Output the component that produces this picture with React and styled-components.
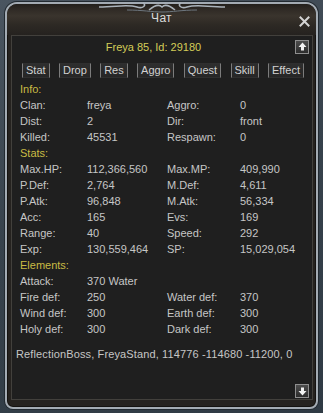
import React from "react";
import styled, { createGlobalStyle } from "styled-components";

const Global = createGlobalStyle`
  html, body { margin: 0; padding: 0; }
  body {
    width: 323px;
    height: 413px;
    overflow: hidden;
    background: linear-gradient(160deg, #4a5560 0%, #37424c 45%, #2f3a44 100%);
    font-family: "Liberation Sans", Arial, sans-serif;
  }
`;

const Page = styled.div`
  width: 323px;
  height: 413px;
  padding: 2px 5px 4px 5px;
  box-sizing: border-box;
  position: relative;
`;

const Window = styled.div`
  position: relative;
  height: 100%;
  box-sizing: border-box;
  border: 2px solid #a3abb3;
  border-radius: 12px 12px 8px 8px;
  background: #25221f;
  box-shadow: inset 0 0 0 1px #141210, 0 0 0 1px #222a31;
  display: flex;
  flex-direction: column;
`;

const Ornament = styled.svg`
  position: absolute;
  top: -3px;
  left: 50%;
  transform: translateX(-50%);
`;

const Header = styled.div`
  height: 31px;
  display: grid;
  grid-template-columns: 1fr auto 1fr;
  align-items: center;
  border-radius: 10px 10px 0 0;
  background: linear-gradient(
    180deg,
    #221f1b 0%,
    #2e2924 15%,
    #3a342d 38%,
    #2d2924 68%,
    #25221f 100%
  );
`;

const Title = styled.div`
  grid-column: 2;
  color: #dcdcdc;
  font-size: 12px;
  margin-top: -4px;
  letter-spacing: 0.3px;
`;

const Close = styled.div`
  justify-self: end;
  margin-right: 6px;
  margin-top: -3px;
  width: 11px;
  height: 11px;
`;

const Panel = styled.div`
  flex: 1;
  margin: 0 3px 7px 4px;
  background: #1f1f1f;
  border: 1px solid #42403c;
  display: flex;
  flex-direction: column;
`;

const TopRow = styled.div`
  display: grid;
  grid-template-columns: 1fr 14px;
  align-items: center;
  padding: 3px 3px 0 0;
`;

const Name = styled.div`
  text-align: center;
  color: #d4cd58;
  font-size: 11px;
  line-height: 14px;
  padding-top: 1px;
`;

const ScrollBtn = styled.div`
  width: 14px;
  height: 14px;
  box-sizing: border-box;
  border: 1px solid #8e8e8e;
  background: linear-gradient(180deg, #4c4c4c, #2c2c2c);
  display: flex;
  align-items: center;
  justify-content: center;
  align-self: ${(p) => (p.$bottom ? "flex-end" : "auto")};
  margin: ${(p) => (p.$bottom ? "auto 3px 1px 0" : "0")};
`;

const Tabs = styled.div`
  display: flex;
  justify-content: space-between;
  padding: 0 8px 0 10px;
  margin-top: 9px;
`;

const Tab = styled.div`
  height: 15px;
  box-sizing: border-box;
  padding: 0 3px;
  font-size: 11px;
  line-height: 13px;
  color: #d2d2d2;
  background: linear-gradient(180deg, #2e2e2e, #262626);
  border: 1px solid #2f2f2f;
  border-left-color: #7c7c7c;
  border-right-color: #7c7c7c;
`;

const Grid = styled.div`
  display: grid;
  grid-template-columns: 67px 80px 73px 1fr;
  padding-left: 8px;
  margin-top: 3px;
  font-size: 11px;
  line-height: 16px;
  color: #c6c6c6;
`;

const Heading = styled.div`
  grid-column: 1 / -1;
  color: #c9bb44;
`;

const Cell = styled.div`
  white-space: nowrap;
  grid-column: ${(p) => p.$span || "auto"};
`;

const Location = styled.div`
  padding-left: 4px;
  margin-top: 9px;
  font-size: 11px;
  line-height: 16px;
  letter-spacing: 0.13px;
  color: #c6c6c6;
  white-space: nowrap;
`;

const Arrow = ({ down }) => (
  <svg width="9" height="9" viewBox="0 0 9 9">
    <path
      d="M4.5 0.5 L8.5 5 L6 5 L6 8.5 L3 8.5 L3 5 L0.5 5 Z"
      fill="#f2f2f2"
      transform={down ? "rotate(180 4.5 4.5)" : undefined}
    />
  </svg>
);

const rows = [
  { h: "Info:" },
  ["Clan:", "freya", "Aggro:", "0"],
  ["Dist:", "2", "Dir:", "front"],
  ["Killed:", "45531", "Respawn:", "0"],
  { h: "Stats:" },
  ["Max.HP:", "112,366,560", "Max.MP:", "409,990"],
  ["P.Def:", "2,764", "M.Def:", "4,611"],
  ["P.Atk:", "96,848", "M.Atk:", "56,334"],
  ["Acc:", "165", "Evs:", "169"],
  ["Range:", "40", "Speed:", "292"],
  ["Exp:", "130,559,464", "SP:", "15,029,054"],
  { h: "Elements:" },
  { a: ["Attack:", "370 Water"] },
  ["Fire def:", "250", "Water def:", "370"],
  ["Wind def:", "300", "Earth def:", "300"],
  ["Holy def:", "300", "Dark def:", "300"],
];

const tabs = ["Stat", "Drop", "Res", "Aggro", "Quest", "Skill", "Effect"];

export default function App() {
  return (
    <>
      <Global />
      <Page>
        <Window>
          <Ornament width="130" height="12" viewBox="0 0 130 12">
            <path
              d="M2 6 C 20 6, 30 3, 40 6 C 46 8, 50 4, 46 2 M128 6 C 110 6, 100 3, 90 6 C 84 8, 80 4, 84 2 M52 9 C 58 4, 62 3, 65 6 C 68 3, 72 4, 78 9"
              stroke="#aab3bb"
              strokeWidth="1.6"
              fill="none"
            />
            <path
              d="M30 9 C 45 9, 55 11, 65 11 C 75 11, 85 9, 100 9"
              stroke="#6d767e"
              strokeWidth="1"
              fill="none"
            />
          </Ornament>
          <Header>
            <Title>Чат</Title>
            <Close>
              <svg width="11" height="11" viewBox="0 0 11 11">
                <path
                  d="M1.5 1.5 L9.5 9.5 M9.5 1.5 L1.5 9.5"
                  stroke="#d4d4d4"
                  strokeWidth="2"
                  strokeLinecap="square"
                />
              </svg>
            </Close>
          </Header>
          <Panel>
            <TopRow>
              <Name>Freya 85, Id: 29180</Name>
              <ScrollBtn>
                <Arrow />
              </ScrollBtn>
            </TopRow>
            <Tabs>
              {tabs.map((t) => (
                <Tab key={t}>{t}</Tab>
              ))}
            </Tabs>
            <Grid>
              {rows.map((r, i) => {
                if (r.h) return <Heading key={i}>{r.h}</Heading>;
                if (r.a)
                  return (
                    <React.Fragment key={i}>
                      <Cell>{r.a[0]}</Cell>
                      <Cell $span="2 / -1">{r.a[1]}</Cell>
                    </React.Fragment>
                  );
                return r.map((c, j) => <Cell key={i + "-" + j}>{c}</Cell>);
              })}
            </Grid>
            <Location>ReflectionBoss, FreyaStand, 114776 -114680 -11200, 0</Location>
            <ScrollBtn $bottom>
              <Arrow down />
            </ScrollBtn>
          </Panel>
        </Window>
      </Page>
    </>
  );
}
